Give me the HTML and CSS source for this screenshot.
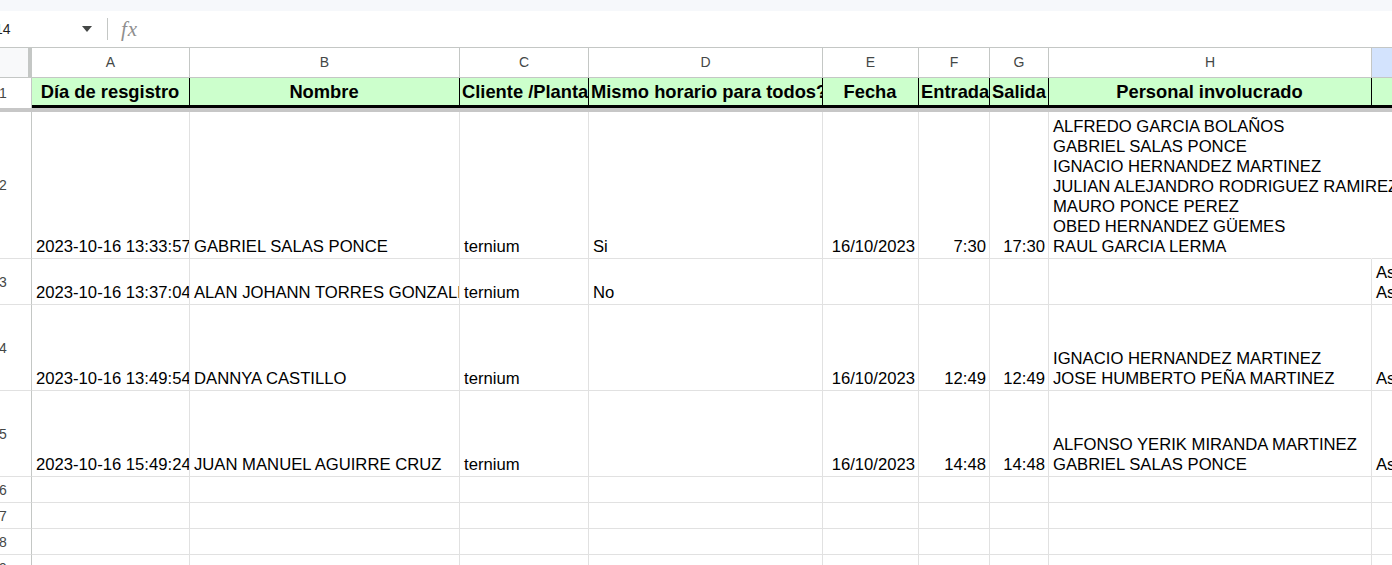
FILE: index.html
```html
<!DOCTYPE html>
<html lang="es">
  <head>
    <meta charset="UTF-8" />
    <title>Registro de personal</title>
    <link rel="stylesheet" href="styles.css">
  </head>
  <body>
    <div class="topband"></div>

    <!-- Name box + formula bar -->
    <div class="formula-bar">
      <span class="namebox">I14</span>
      <svg class="caret" width="10" height="6" viewBox="0 0 10 6"><polygon points="0,0 10,0 5,6" fill="#444746"/></svg>
      <span class="sep"></span>
      <span class="fx">fx</span>
    </div>

    <div class="sheet">
      <!-- Column letters -->
      <div class="row colhead">
        <div class="corner"></div>
        <div class="ch">A</div>
        <div class="ch">B</div>
        <div class="ch">C</div>
        <div class="ch">D</div>
        <div class="ch">E</div>
        <div class="ch">F</div>
        <div class="ch">G</div>
        <div class="ch">H</div>
        <div class="ch selected">I</div>
      </div>

      <!-- Row 1: titles -->
      <div class="row">
        <div class="rh rh-first">1</div>
        <div class="hc">Día de resgistro</div>
        <div class="hc">Nombre</div>
        <div class="hc">Cliente /Planta, Ubicación</div>
        <div class="hc">Mismo horario para todos?</div>
        <div class="hc">Fecha</div>
        <div class="hc">Entrada</div>
        <div class="hc">Salida</div>
        <div class="hc">Personal involucrado</div>
        <div class="hc">Tipo de servicio</div>
      </div>

      <div class="freeze"></div>

      <div class="row h147">
        <div class="rh">2</div>
        <div class="cell">2023-10-16 13:33:57</div>
        <div class="cell">GABRIEL SALAS PONCE</div>
        <div class="cell">ternium</div>
        <div class="cell">Si</div>
        <div class="cell num">16/10/2023</div>
        <div class="cell num">7:30</div>
        <div class="cell num">17:30</div>
        <div class="cell spill">ALFREDO GARCIA BOLAÑOS<br>GABRIEL SALAS PONCE<br>IGNACIO HERNANDEZ MARTINEZ<br>JULIAN ALEJANDRO RODRIGUEZ RAMIREZ<br>MAURO PONCE PEREZ<br>OBED HERNANDEZ GÜEMES<br>RAUL GARCIA LERMA</div>
        <div class="cell"></div>
      </div>

      <div class="row h46">
        <div class="rh">3</div>
        <div class="cell">2023-10-16 13:37:04</div>
        <div class="cell">ALAN JOHANN TORRES GONZALEZ</div>
        <div class="cell">ternium</div>
        <div class="cell">No</div>
        <div class="cell num"></div>
        <div class="cell num"></div>
        <div class="cell num"></div>
        <div class="cell"></div>
        <div class="cell">Asistencia<br>Asistencia</div>
      </div>

      <div class="row h86">
        <div class="rh">4</div>
        <div class="cell">2023-10-16 13:49:54</div>
        <div class="cell">DANNYA CASTILLO</div>
        <div class="cell">ternium</div>
        <div class="cell"></div>
        <div class="cell num">16/10/2023</div>
        <div class="cell num">12:49</div>
        <div class="cell num">12:49</div>
        <div class="cell">IGNACIO HERNANDEZ MARTINEZ<br>JOSE HUMBERTO PEÑA MARTINEZ</div>
        <div class="cell">Asistencia</div>
      </div>

      <div class="row h86">
        <div class="rh">5</div>
        <div class="cell">2023-10-16 15:49:24</div>
        <div class="cell">JUAN MANUEL AGUIRRE CRUZ</div>
        <div class="cell">ternium</div>
        <div class="cell"></div>
        <div class="cell num">16/10/2023</div>
        <div class="cell num">14:48</div>
        <div class="cell num">14:48</div>
        <div class="cell">ALFONSO YERIK MIRANDA MARTINEZ<br>GABRIEL SALAS PONCE</div>
        <div class="cell">Asistencia</div>
      </div>

      <div class="row h26">
        <div class="rh">6</div>
        <div class="cell"></div><div class="cell"></div><div class="cell"></div><div class="cell"></div><div class="cell"></div><div class="cell"></div><div class="cell"></div><div class="cell"></div><div class="cell"></div>
      </div>
      <div class="row h26">
        <div class="rh">7</div>
        <div class="cell"></div><div class="cell"></div><div class="cell"></div><div class="cell"></div><div class="cell"></div><div class="cell"></div><div class="cell"></div><div class="cell"></div><div class="cell"></div>
      </div>
      <div class="row h26">
        <div class="rh">8</div>
        <div class="cell"></div><div class="cell"></div><div class="cell"></div><div class="cell"></div><div class="cell"></div><div class="cell"></div><div class="cell"></div><div class="cell"></div><div class="cell"></div>
      </div>
      <div class="row h26">
        <div class="rh">9</div>
        <div class="cell"></div><div class="cell"></div><div class="cell"></div><div class="cell"></div><div class="cell"></div><div class="cell"></div><div class="cell"></div><div class="cell"></div><div class="cell"></div>
      </div>
    </div>
  </body>
</html>
```

FILE: styles.css
```css
body {
  margin: 0;
  overflow: hidden;
  font-family: "Liberation Sans", Arial, sans-serif;
  color: #000;
  background: #fff;
}
.topband {
  height: 11px;
  background-color: #f6f8fb;
}
.formula-bar {
  box-sizing: border-box;
  height: 37px;
  display: flex;
  align-items: center;
  border-bottom: 1px solid #c4c7c5;
  background: #fff;
}
.namebox {
  width: 91px;
  margin-left: -9px;
  font-size: 14px;
  color: #1f1f1f;
}
.caret {
  display: block;
}
.sep {
  width: 1px;
  height: 22px;
  margin-left: 15px;
  background-color: #c4c7c5;
}
.fx {
  margin-left: 13px;
  font-family: "Liberation Serif", serif;
  font-style: italic;
  font-size: 21px;
  letter-spacing: 1px;
  color: #8f8f8f;
}
.sheet {
  width: 1672px;
}
.row {
  display: grid;
  grid-template-columns: 32px 158px 270px 129px 234px 96px 71px 59px 323px 300px;
}
.row > div {
  box-sizing: border-box;
  overflow: hidden;
  white-space: nowrap;
}

/* column letters */
.colhead {
  height: 30px;
}
.corner {
  background-color: #f8f9fa;
  border-right: 4px solid #c4c7c5;
  border-bottom: 1px solid #c4c7c5;
}
.ch {
  font-size: 14px;
  color: #444746;
  text-align: center;
  line-height: 29px;
  border-right: 1px solid #c4c7c5;
  border-bottom: 1px solid #c4c7c5;
}
.ch.selected {
  background-color: #d3e3fd;
}

/* row numbers */
.rh {
  display: flex;
  align-items: center;
  font-size: 14px;
  color: #444746;
  text-indent: -1px;
  border-right: 1px solid #c4c7c5;
  border-bottom: 1px solid #e1e1e1;
}
.rh-first {
  height: 30px;
  border-bottom: none;
}

/* title row */
.hc {
  height: 30px;
  padding: 0 3px 0 2px;
  font-size: 18.33px;
  font-weight: bold;
  line-height: 27px;
  text-align: center;
  background-color: #ccffcc;
  border-right: 1px solid #000;
  border-bottom: 3px solid #000;
}
.freeze {
  height: 4px;
  background-color: #c7c7c7;
}

/* data cells */
.cell {
  display: flex;
  flex-direction: column;
  justify-content: flex-end;
  padding: 0 3px 1px 4px;
  font-size: 16.67px;
  line-height: 20px;
  border-right: 1px solid #e1e1e1;
  border-bottom: 1px solid #e1e1e1;
}
.cell.num {
  text-align: right;
}
/* text running on into the empty cell next to it */
.row > .spill {
  overflow: visible;
  border-right-color: transparent;
}
.h147 { height: 147px; }
.h46 { height: 46px; }
.h86 { height: 86px; }
.h26 { height: 26px; }
```
